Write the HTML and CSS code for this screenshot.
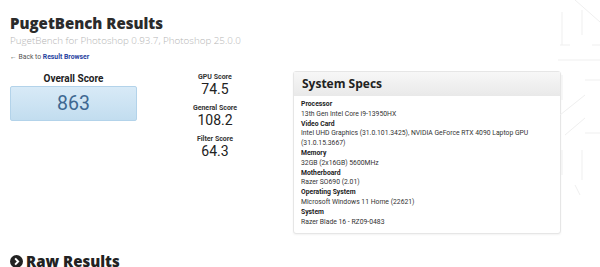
FILE: index.html
```html
<!DOCTYPE html>
<html lang="en">
<head>
<meta charset="UTF-8">
<meta name="viewport" content="width=device-width, initial-scale=1.0">
<title>PugetBench Results</title>
<link rel="stylesheet" href="styles.css">
</head>
<body>
    <svg class="circuit" width="70" height="267" viewBox="0 0 70 267">
        <g stroke="#efefef" stroke-width="1" fill="none">
            <path d="M45 0 L70 22"/>
            <path d="M32 12 L32 45"/>
            <path d="M52 10 L52 35"/>
            <path d="M30 45 L40 45"/>
            <path d="M62 45 L70 45"/>
            <path d="M28 60 L70 60"/>
            <path d="M32 75 L32 100"/>
            <path d="M55 80 L70 80"/>
            <path d="M30 115 L55 95"/>
            <path d="M35 135 L55 118"/>
            <path d="M55 133 L70 133"/>
            <path d="M32 150 L32 175"/>
            <path d="M52 150 L52 180"/>
            <path d="M45 185 L50 195"/>
        </g>
    </svg>
    <div class="page">
        <h1>PugetBench Results</h1>
        <div class="subtitle">PugetBench for Photoshop 0.93.7, Photoshop 25.0.0</div>
        <div class="back">&larr; Back to <a href="#">Result Browser</a></div>

        <div class="summary">
            <div class="overall">
                <div class="overall-label">Overall Score</div>
                <div class="overall-box">863</div>
            </div>
            <div class="scores">
                <div class="score">
                    <div class="score-label">GPU Score</div>
                    <div class="score-value">74.5</div>
                </div>
                <div class="score">
                    <div class="score-label">General Score</div>
                    <div class="score-value">108.2</div>
                </div>
                <div class="score">
                    <div class="score-label">Filter Score</div>
                    <div class="score-value">64.3</div>
                </div>
            </div>
            <div class="specs">
                <div class="specs-head">System Specs</div>
                <div class="specs-body">
                    <b>Processor</b>
                    <span>13th Gen Intel Core i9-13950HX</span>
                    <b>Video Card</b>
                    <span>Intel UHD Graphics (31.0.101.3425), NVIDIA GeForce RTX 4090 Laptop GPU (31.0.15.3667)</span>
                    <b>Memory</b>
                    <span>32GB (2x16GB) 5600MHz</span>
                    <b>Motherboard</b>
                    <span>Razer SO690 (2.01)</span>
                    <b>Operating System</b>
                    <span>Microsoft Windows 11 Home (22621)</span>
                    <b>System</b>
                    <span>Razer Blade 16 - RZ09-0483</span>
                </div>
            </div>
        </div>

        <h2 class="raw">
            <svg class="raw-icon" width="13" height="13" viewBox="0 0 16 16">
                <circle cx="8" cy="8" r="8" fill="#222"/>
                <path d="M6.3 4.2 L10 8 L6.3 11.8" stroke="#fff" stroke-width="2.4" fill="none"/>
            </svg>
            Raw Results
        </h2>
    </div>
</body>
</html>
```

FILE: styles.css
```css
body {
    margin: 0;
    padding: 0;
    background: #fff;
    font-family: Roboto, "Liberation Sans", sans-serif;
    color: #333;
    overflow: hidden;
}
.circuit {
    position: absolute;
    top: 0;
    right: 0;
}
.page {
    padding: 14px 10px 0 10px;
    width: 551px;
}
h1 {
    margin: 0;
    font-family: "Open Sans", sans-serif;
    font-weight: 800;
    font-size: 15px;
    line-height: 18px;
    color: #2b2b2b;
}
.subtitle {
    margin-top: 3px;
    font-family: "Open Sans", sans-serif;
    font-weight: 300;
    font-size: 9.8px;
    line-height: 12px;
    color: #b5b5b5;
}
.back {
    margin-top: 6px;
    font-size: 6.8px;
    line-height: 9px;
    color: #555;
}
.back a {
    color: #1f3fa0;
    font-weight: 700;
    text-decoration: none;
}

/* resumo de pontuações */
.summary {
    display: grid;
    grid-template-columns: 127px 1fr 268px;
    align-items: start;
    margin-top: 9px;
}
.overall {
    text-align: center;
    padding-top: 2px;
}
.overall-label {
    font-weight: 700;
    font-size: 10px;
    line-height: 12px;
    color: #222;
}
.overall-box {
    margin-top: 1px;
    height: 35px;
    line-height: 33px;
    font-size: 19.5px;
    color: #3e6891;
    background: linear-gradient(#d8eaf7, #c2ddef);
    border: 1px solid #b3d3ea;
    border-radius: 2px;
    box-sizing: border-box;
}
.scores {
    display: flex;
    flex-direction: column;
    align-items: center;
    gap: 7px;
    padding-top: 2px;
}
.score {
    text-align: center;
}
.score-label {
    font-weight: 700;
    font-size: 7px;
    line-height: 8px;
    color: #333;
}
.score-value {
    font-size: 14px;
    line-height: 16px;
    color: #222;
}
.specs {
    border: 1px solid #e6e6e6;
    border-radius: 3px;
    box-shadow: 0 1px 2px rgba(0, 0, 0, 0.05);
    background: #fff;
}
.specs-head {
    height: 24px;
    line-height: 24px;
    padding-left: 8px;
    font-family: "Open Sans", sans-serif;
    font-weight: 700;
    font-size: 12px;
    color: #222;
    background: linear-gradient(#f7f7f7, #e9e9e9);
}
.specs-body {
    display: flex;
    flex-direction: column;
    padding: 4px 8px 6px 7px;
    font-size: 6.8px;
    line-height: 9.8px;
    color: #333;
}
.specs-body b {
    font-weight: 700;
    color: #222;
}
.raw {
    display: flex;
    align-items: center;
    gap: 3px;
    margin: 17px 0 0 0;
    font-family: "Open Sans", sans-serif;
    font-weight: 800;
    font-size: 15px;
    line-height: 20px;
    color: #222;
}
```
